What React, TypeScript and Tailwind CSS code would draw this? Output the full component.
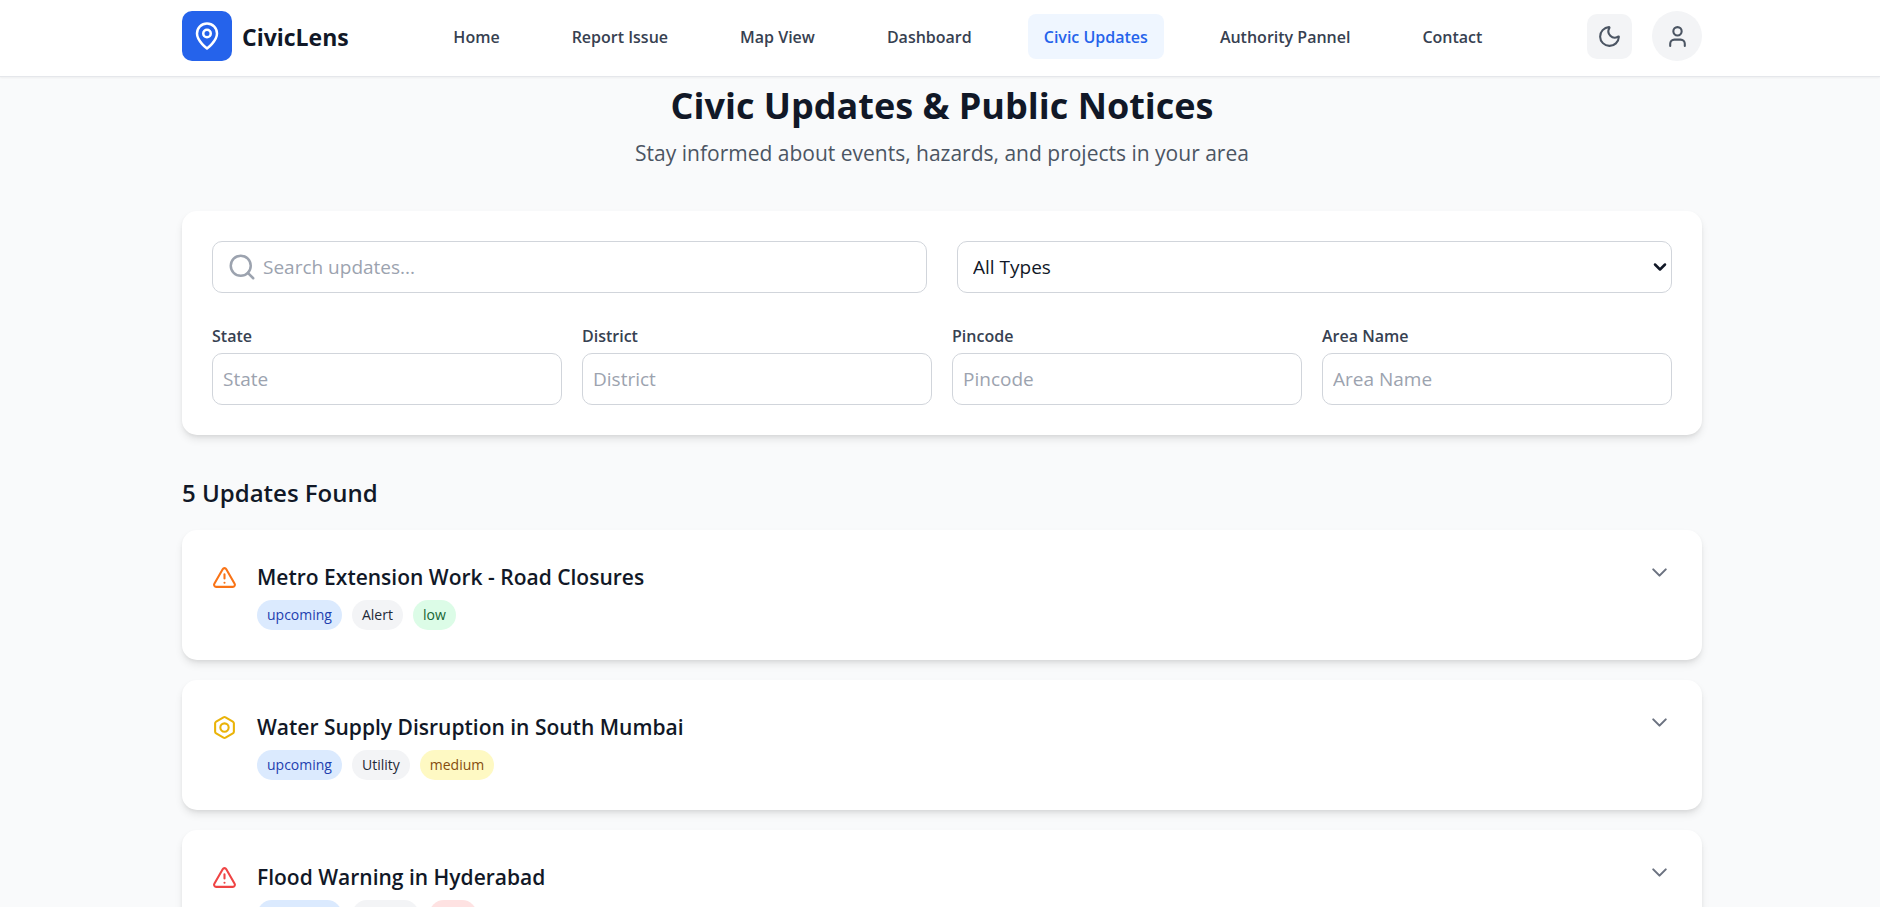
import { Bolt, ChevronDown, Moon, Search, TriangleAlert, User } from "lucide-react";

const navItems = [
  "Home",
  "Report Issue",
  "Map View",
  "Dashboard",
  "Civic Updates",
  "Authority Pannel",
  "Contact",
];

const locationFields = ["State", "District", "Pincode", "Area Name"];

const severityStyles: Record<string, string> = {
  low: "bg-[#dcfce7] text-[#166534]",
  medium: "bg-[#fef9c3] text-[#854d0e]",
  high: "bg-[#fee2e2] text-[#991b1b]",
};

const updates = [
  {
    title: "Metro Extension Work - Road Closures",
    status: "upcoming",
    type: "Alert",
    severity: "low",
    icon: <TriangleAlert className="w-[25px] h-[25px] text-[#f97316]" />,
  },
  {
    title: "Water Supply Disruption in South Mumbai",
    status: "upcoming",
    type: "Utility",
    severity: "medium",
    icon: <Bolt className="w-[25px] h-[25px] text-[#eab308]" />,
  },
  {
    title: "Flood Warning in Hyderabad",
    status: "upcoming",
    type: "Hazard",
    severity: "high",
    icon: <TriangleAlert className="w-[25px] h-[25px] text-[#ef4444]" />,
  },
];

function Header() {
  return (
    <header className="bg-white border-b border-[#e5e7eb] shadow-xs pl-1 pb-1">
      <div className="flex items-center justify-between h-18 max-w-[1600px] mx-auto px-10">
        <a href="#" className="flex items-center gap-2.5">
          <span className="flex items-center justify-center w-[50px] h-[50px] rounded-[10px] bg-[#2563eb]">
            <svg
              viewBox="0 0 24 24"
              className="w-[30px] h-[30px] text-white"
              fill="none"
              stroke="currentColor"
              strokeWidth="2"
              strokeLinecap="round"
              strokeLinejoin="round"
            >
              <path d="M20 10c0 6-8 12-8 12s-8-6-8-12a8 8 0 0 1 16 0Z" />
              <circle cx="12" cy="10" r="3" />
            </svg>
          </span>
          <span className="pt-0.5 text-[23px] font-bold text-[#111827]">CivicLens</span>
        </a>
        <nav className="flex items-center gap-10">
          {navItems.map((item) => (
            <a
              key={item}
              href="#"
              className={`flex items-center h-[45px] px-4 pt-0.5 rounded-lg text-base font-semibold whitespace-nowrap ${
                item === "Civic Updates" ? "bg-[#eff6ff] text-[#2563eb]" : "text-[#374151]"
              }`}
            >
              {item}
            </a>
          ))}
        </nav>
        <div className="flex items-center gap-5 text-[#4b5563]">
          <button
            aria-label="Toggle dark mode"
            className="flex items-center justify-center w-[45px] h-[45px] rounded-[10px] bg-[#f3f4f6]"
          >
            <Moon className="w-[25px] h-[25px]" />
          </button>
          <button
            aria-label="Account"
            className="flex items-center justify-center w-[50px] h-[50px] rounded-full bg-[#f3f4f6]"
          >
            <User className="w-[25px] h-[25px]" />
          </button>
        </div>
      </div>
    </header>
  );
}

function Filters() {
  return (
    <section className="p-[30px] bg-white rounded-[15px] shadow-[0_5px_8px_-1px_rgba(0,0,0,0.1),0_2px_5px_-2px_rgba(0,0,0,0.1)]">
      <div className="grid grid-cols-2 gap-[30px] mb-[30px]">
        <div className="relative">
          <Search className="absolute left-[15px] top-[11px] w-[30px] h-[30px] text-[#9ca3af]" />
          <input
            type="text"
            aria-label="Search updates"
            placeholder="Search updates..."
            className="w-full h-[52px] pl-[50px] pr-[15px] border border-[#d1d5db] rounded-[10px] text-[19px] placeholder:text-[#9ca3af]"
          />
        </div>
        <div className="relative">
          <select
            aria-label="Update type"
            className="appearance-none w-full h-[52px] px-[15px] bg-white border border-[#d1d5db] rounded-[10px] text-[19px] text-[#111827]"
          >
            <option>All Types</option>
          </select>
          <ChevronDown
            strokeWidth={3}
            className="absolute right-0.5 top-4 w-5 h-5 text-[#111827] pointer-events-none"
          />
        </div>
      </div>
      <div className="grid grid-cols-4 gap-5">
        {locationFields.map((field) => (
          <label key={field} className="block text-base leading-[26px] font-semibold text-[#374151]">
            {field}
            <input
              type="text"
              placeholder={field}
              className="block w-full h-[52px] mt-1 px-2.5 border border-[#d1d5db] rounded-[10px] text-[19px] font-normal placeholder:text-[#9ca3af]"
            />
          </label>
        ))}
      </div>
    </section>
  );
}

export default function App() {
  return (
    <div className="min-h-screen bg-[#f9fafb] font-['Open_Sans','Noto_Sans',sans-serif]">
      <Header />
      <main className="pl-1">
        <div className="max-w-[1600px] mx-auto px-10 pt-1">
          <div className="text-center mb-11">
            <h1 className="text-4xl leading-[50px] font-bold text-[#111827]">
              Civic Updates &amp; Public Notices
            </h1>
            <p className="mt-2 text-[21px] leading-7 text-[#4b5563]">
              Stay informed about events, hazards, and projects in your area
            </p>
          </div>
          <Filters />
          <h2 className="mt-10 mb-5 text-2xl leading-[35px] font-semibold text-[#111827]">
            5 Updates Found
          </h2>
          <div className="space-y-5">
            {updates.map((update) => (
              <article
                key={update.title}
                className="flex items-start justify-between p-[30px] bg-white rounded-[15px] shadow-[0_5px_8px_-1px_rgba(0,0,0,0.1),0_2px_5px_-2px_rgba(0,0,0,0.1)]"
              >
                <div className="flex items-start gap-5">
                  <div className="pt-[5px]">{update.icon}</div>
                  <div>
                    <h3 className="text-[21px] leading-[35px] font-semibold text-[#111827]">
                      {update.title}
                    </h3>
                    <div className="flex gap-2.5 mt-[5px] text-sm leading-5">
                      <span className="px-2.5 py-[5px] rounded-full bg-[#dbeafe] text-[#1e40af]">
                        {update.status}
                      </span>
                      <span className="px-2.5 py-[5px] rounded-full bg-[#f3f4f6] text-[#1f2937]">
                        {update.type}
                      </span>
                      <span className={`px-2.5 py-[5px] rounded-full ${severityStyles[update.severity]}`}>
                        {update.severity}
                      </span>
                    </div>
                  </div>
                </div>
                <button aria-label="Show details" className="text-[#6b7280]">
                  <ChevronDown className="w-[25px] h-[25px]" />
                </button>
              </article>
            ))}
          </div>
        </div>
      </main>
    </div>
  );
}
